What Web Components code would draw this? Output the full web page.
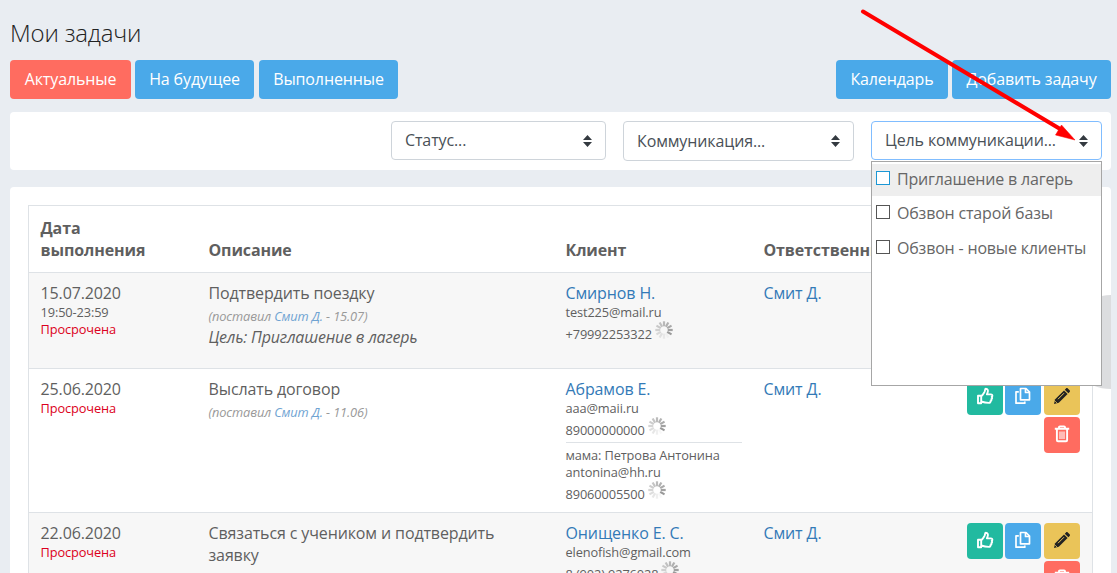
<!DOCTYPE html>
<html lang="ru">
<head>
<meta charset="utf-8">
<title>Мои задачи</title>
<style>
    html, body { margin: 0; height: 100%; overflow: hidden; }
    body {
        background: #e9edf2;
        color: #5f5f5f;
        font: 16px/22px "Open Sans", sans-serif;
        letter-spacing: -0.12px;
    }
</style>
</head>
<body>
<tasks-page></tasks-page>

<script>
const ICONS = {
    like: `<path d="M2 8.800h3.200v7.400H2zM5.200 9.200C7 8 7.800 6 8.600 4.800c.5-.8.2-3 1.200-3 2 0 2.500 1.700 1.900 3.400l-.8 2.200h4.100c1.700 0 1.700 2 .7 2.500.7.8.6 1.900-.4 2.300.4.900 0 1.700-.8 2 .1 1.200-.6 1.700-1.700 1.700-3.100 0-4.600-.3-7.600-1.400" fill="none" stroke="#fff" stroke-width="1.900" stroke-linejoin="round"/>`,
    copy: `<path d="M6.500 1.500h5.500l3.500 3.500v7.800h-9zM11.500 1.500v4h4M4.800 4.800H2v11.400h8.800v-1.800" fill="none" stroke="#fff" stroke-width="1.700" stroke-linejoin="round"/>`,
    edit: `<path d="M1 17l1.200-4.800 8.800-8.700 3.600 3.600-8.800 8.700z" fill="#222"/><path d="M11.800 2.700l1.200-1.200c.6-.6 1.200-.6 1.800 0l1.800 1.800c.6.6.6 1.200 0 1.800l-1.200 1.200z" fill="#222"/><path d="M5 12.200l6-6M2.300 14.300l1.500 1.500" stroke="#eac459" stroke-width="1"/>`,
    trash: `<path d="M1.800 3.800h14.400M6 3.500V2.300c0-.6.300-.9.900-.9h4.200c.6 0 .9.300.9.900v1.200M3.900 4v11.200c0 .7.400 1.100 1.100 1.100h8c.7 0 1.100-.4 1.100-1.100V4" fill="none" stroke="#fff" stroke-width="1.900"/><path d="M7 6.500v7.500M9 6.500v7.500M11 6.500v7.500" stroke="#fff" stroke-width="1.100"/>`
};

// Solid button of the toolbar, type is "primary" or "active".
class UiButton extends HTMLElement {
    constructor() {
        super();
        this.attachShadow({ mode: "open" });
    }

    connectedCallback() {
        const color = this.getAttribute("type") === "active" ? "#ff6c60" : "#4aa9e9";
        this.shadowRoot.innerHTML = `
            <style>
                :host { display: block; }
                button {
                    display: block;
                    width: 100%;
                    height: 39px;
                    padding: 0 0 2px;
                    border: 0;
                    border-radius: 4px;
                    background: ${color};
                    color: #fff;
                    font: inherit;
                    letter-spacing: inherit;
                    white-space: nowrap;
                }
            </style>
            <button><slot></slot></button>
        `;
    }
}

// Square button with one of the ICONS.
class IconButton extends HTMLElement {
    constructor() {
        super();
        this.attachShadow({ mode: "open" });
    }

    connectedCallback() {
        const colors = { like: "#22baa0", copy: "#4aa9e9", edit: "#eac459", trash: "#ff6c60" };
        const icon = this.getAttribute("icon");
        this.shadowRoot.innerHTML = `
            <style>
                :host { display: block; }
                button {
                    display: flex;
                    align-items: center;
                    justify-content: center;
                    width: 36px;
                    height: 36px;
                    padding: 0 0 2px;
                    border: 0;
                    border-radius: 4px;
                    background: ${colors[icon]};
                }
            </style>
            <button><svg width="18" height="18" viewBox="0 0 18 18">${ICONS[icon]}</svg></button>
        `;
    }
}

// Loading wheel, the spokes fade counter-clockwise.
class LoadSpinner extends HTMLElement {
    connectedCallback() {
        this.attachShadow({ mode: "open" });
        let spokes = "";
        for (let i = 0; i < 12; i++) {
            const opacity = Math.max(0.06, 1 - i * 0.085);
            spokes += `<path d="M9 .3v5" stroke="#999" stroke-width="2.200" opacity="${opacity}" transform="rotate(${120 - i * 30} 9 9)"/>`;
        }
        this.shadowRoot.innerHTML = `
            <style>:host { display: block; width: 18px; height: 18px; } svg { display: block; }</style>
            <svg width="18" height="18" viewBox="0 0 18 18">${spokes}</svg>
        `;
    }
}

// Closed select box, options of an opened list go to the "menu" slot.
class FilterSelect extends HTMLElement {
    connectedCallback() {
        this.attachShadow({ mode: "open" });
        this.shadowRoot.innerHTML = `
            <style>
                :host { display: block; position: relative; height: 39px; }
                .box {
                    box-sizing: border-box;
                    height: 100%;
                    display: flex;
                    align-items: center;
                    justify-content: space-between;
                    padding: 0 13px;
                    border: 1px solid #ced4da;
                    border-radius: 4px;
                    background: #fff;
                    color: #495057;
                }
                .box span { padding-bottom: 1px; }
                :host([open]) .box { border-color: #80bdff; }
                ::slotted([slot=menu]) {
                    position: absolute;
                    z-index: 2;
                    top: 40px;
                    left: 0;
                    right: 0;
                }
            </style>
            <div class="box">
                <span><slot></slot></span>
                <svg width="9" height="12" viewBox="0 0 9 12"><path d="M0 5l4.500-5L9 5zM0 7h9l-4.500 5z" fill="#343a40"/></svg>
            </div>
            <slot name="menu"></slot>
        `;
    }
}

class OptionList extends HTMLElement {
    connectedCallback() {
        this.attachShadow({ mode: "open" });
        this.shadowRoot.innerHTML = `
            <style>
                :host {
                    display: block;
                    box-sizing: border-box;
                    height: 225px;
                    padding-top: 2px;
                    border: 1px solid #a6a6a6;
                    background: #fff;
                }
            </style>
            <slot></slot>
        `;
    }
}

class CheckOption extends HTMLElement {
    connectedCallback() {
        this.attachShadow({ mode: "open" });
        this.shadowRoot.innerHTML = `
            <style>
                :host {
                    display: flex;
                    align-items: center;
                    gap: 7px;
                    height: 32px;
                    margin-bottom: 2.300px;
                    padding-left: 4px;
                    color: #666;
                    letter-spacing: -0.18px;
                    white-space: nowrap;
                }
                :host([hover]) { background: #eee; }
                i {
                    box-sizing: border-box;
                    width: 14px;
                    height: 14px;
                    margin-bottom: 4px;
                    border: 1px solid #555;
                    background: #fff;
                }
                span { padding-bottom: 2px; }
                :host([hover]) i { border-color: #1c97d5; }
            </style>
            <i></i><span><slot></slot></span>
        `;
    }
}

// White rounded card.
class UiPanel extends HTMLElement {
    connectedCallback() {
        this.attachShadow({ mode: "open" });
        this.shadowRoot.innerHTML = `
            <style>:host { display: block; background: #fff; border-radius: 4px; }</style>
            <slot></slot>
        `;
    }
}

// One task of the table: cells are passed in by slot name.
class TaskRow extends HTMLElement {
    connectedCallback() {
        this.attachShadow({ mode: "open" });
        this.shadowRoot.innerHTML = `
            <style>
                :host {
                    display: grid;
                    grid-template-columns: 168px 357px 198px 1fr 136px;
                    box-sizing: border-box;
                    min-height: 96px;
                    padding-top: 9px;
                    border-bottom: 1px solid #dee2e6;
                }
                :host([odd]) { background: #f7f7f7; }
                :host([head]) {
                    min-height: 67px;
                    padding: 11px 0;
                    align-items: end;
                    font-weight: 700;
                }
                .cell { padding: 0 10.500px 0 11.500px; }
                .buttons {
                    display: flex;
                    flex-wrap: wrap;
                    justify-content: flex-end;
                    align-content: flex-start;
                    gap: 2px;
                    padding: 1px 12px 10px 0;
                }
                .buttons icon-button:nth-child(2) { margin-right: 1px; }
            </style>
            <div class="cell"><slot name="date"></slot></div>
            <div class="cell"><slot name="text"></slot></div>
            <div class="cell"><slot name="client"></slot></div>
            <div class="cell"><slot name="owner"></slot></div>
            ${this.hasAttribute("head") ? "" : `
            <div class="buttons">
                <icon-button icon="like"></icon-button>
                <icon-button icon="copy"></icon-button>
                <icon-button icon="edit"></icon-button>
                <icon-button icon="trash"></icon-button>
            </div>`}
        `;
    }
}

class PhoneLine extends HTMLElement {
    connectedCallback() {
        this.attachShadow({ mode: "open" });
        this.shadowRoot.innerHTML = `
            <style>
                :host { display: flex; gap: 3px; height: 22px; }
                span { padding-top: 5px; }
            </style>
            <span><slot></slot></span><load-spinner></load-spinner>
        `;
    }
}

class TasksPage extends HTMLElement {
    connectedCallback() {
        this.attachShadow({ mode: "open" });
        this.shadowRoot.innerHTML = `
            <style>
                :host {
                    display: block;
                    position: relative;
                    box-sizing: border-box;
                    width: 1117px;
                    height: 573px;
                    padding: 17px 6px 0 10px;
                    overflow: hidden;
                }
                h1 {
                    margin: 0 0 12px;
                    color: #222;
                    font-size: 24px;
                    font-weight: 300;
                    letter-spacing: -0.2px;
                    line-height: 31px;
                }
                .toolbar { display: flex; margin-bottom: 13px; }
                .filters {
                    display: flex;
                    justify-content: flex-end;
                    gap: 17px;
                    height: 49px;
                    padding: 9px 9px 0;
                    margin-bottom: 17px;
                }
                .tasks {
                    position: relative;
                    overflow: hidden;
                    height: 420px;
                    padding: 18px 18px 0;
                }
                .disc {
                    position: absolute;
                    top: 108px;
                    right: -47px;
                    width: 94px;
                    height: 94px;
                    border-radius: 50%;
                    background: #dcdddf;
                }
                .table { position: relative; border: 1px solid #dee2e6; }
                a { color: #337ab7; }
                .small { font-size: 12.800px; line-height: 17px; }
                .late { color: #dc0020; }
                .note {
                    color: #999;
                    font-size: 12.800px;
                    font-style: italic;
                    line-height: 24px;
                    margin-bottom: -2px;
                }
                .note a { color: #6fa3d2; }
                .goal { letter-spacing: -0.2px; }
                hr { height: 1px; margin: 3px 0 4px; border: 0; background: #dee2e6; }
                .arrow { position: absolute; z-index: 3; left: 855px; top: 0; }
            </style>

            <h1>Мои задачи</h1>
            <div class="toolbar">
                <ui-button type="active" style="width: 121px; margin-right: 4px">Актуальные</ui-button>
                <ui-button style="width: 119px; margin-right: 5px">На будущее</ui-button>
                <ui-button style="width: 139px; margin-right: auto">Выполненные</ui-button>
                <ui-button style="width: 112px; margin-right: 4px">Календарь</ui-button>
                <ui-button style="width: 159px">Добавить задачу</ui-button>
            </div>

            <ui-panel class="filters">
                <filter-select style="width: 215px">Статус...</filter-select>
                <filter-select style="width: 231px; height: 40px">Коммуникация...</filter-select>
                <filter-select open style="width: 231px">Цель коммуникации...
                    <option-list slot="menu">
                        <check-option hover>Приглашение в лагерь</check-option>
                        <check-option>Обзвон старой базы</check-option>
                        <check-option>Обзвон - новые клиенты</check-option>
                    </option-list>
                </filter-select>
            </ui-panel>

            <ui-panel class="tasks">
                <div class="disc"></div>
                <div class="table">
                    <task-row head>
                        <div slot="date">Дата<br>выполнения</div>
                        <div slot="text">Описание</div>
                        <div slot="client">Клиент</div>
                        <div slot="owner">Ответственный</div>
                    </task-row>
                    <task-row odd>
                        <div slot="date">15.07.2020
                            <div class="small">19:50-23:59</div>
                            <div class="small late">Просрочена</div>
                        </div>
                        <div slot="text">Подтвердить поездку
                            <div class="note">(поставил <a>Смит Д.</a> - 15.07)</div>
                            <i class="goal">Цель: Приглашение в лагерь</i>
                        </div>
                        <div slot="client"><a>Смирнов Н.</a>
                            <div class="small">test225@mail.ru</div>
                            <phone-line class="small">+79992253322</phone-line>
                        </div>
                        <div slot="owner"><a>Смит Д.</a></div>
                    </task-row>
                    <task-row style="height: 144px">
                        <div slot="date">25.06.2020
                            <div class="small late">Просрочена</div>
                        </div>
                        <div slot="text">Выслать договор
                            <div class="note">(поставил <a>Смит Д.</a> - 11.06)</div>
                        </div>
                        <div slot="client"><a>Абрамов Е.</a>
                            <div class="small">aaa@maii.ru</div>
                            <phone-line class="small">89000000000</phone-line>
                            <hr>
                            <div class="small">мама: Петрова Антонина</div>
                            <div class="small">antonina@hh.ru</div>
                            <phone-line class="small">89060005500</phone-line>
                        </div>
                        <div slot="owner"><a>Смит Д.</a></div>
                    </task-row>
                    <task-row odd>
                        <div slot="date">22.06.2020
                            <div class="small late">Просрочена</div>
                        </div>
                        <div slot="text">Связаться с учеником и подтвердить заявку</div>
                        <div slot="client"><a>Онищенко Е. С.</a>
                            <div class="small">elenofish@gmail.com</div>
                            <phone-line class="small">8 (902) 9276028</phone-line>
                        </div>
                        <div slot="owner"><a>Смит Д.</a></div>
                    </task-row>
                </div>
            </ui-panel>

            <svg class="arrow" width="230" height="150" viewBox="0 0 230 150">
                <path d="M8 11.500L206 129.500" stroke="#f00" stroke-width="4" stroke-linecap="round"/>
                <path d="M220 140l-13.500-15-6 10z" fill="#f00" stroke="#f00" stroke-width=".5"/>
            </svg>
        `;
    }
}

customElements.define("ui-button", UiButton);
customElements.define("icon-button", IconButton);
customElements.define("load-spinner", LoadSpinner);
customElements.define("filter-select", FilterSelect);
customElements.define("option-list", OptionList);
customElements.define("check-option", CheckOption);
customElements.define("ui-panel", UiPanel);
customElements.define("phone-line", PhoneLine);
customElements.define("task-row", TaskRow);
customElements.define("tasks-page", TasksPage);
</script>
</body>
</html>
